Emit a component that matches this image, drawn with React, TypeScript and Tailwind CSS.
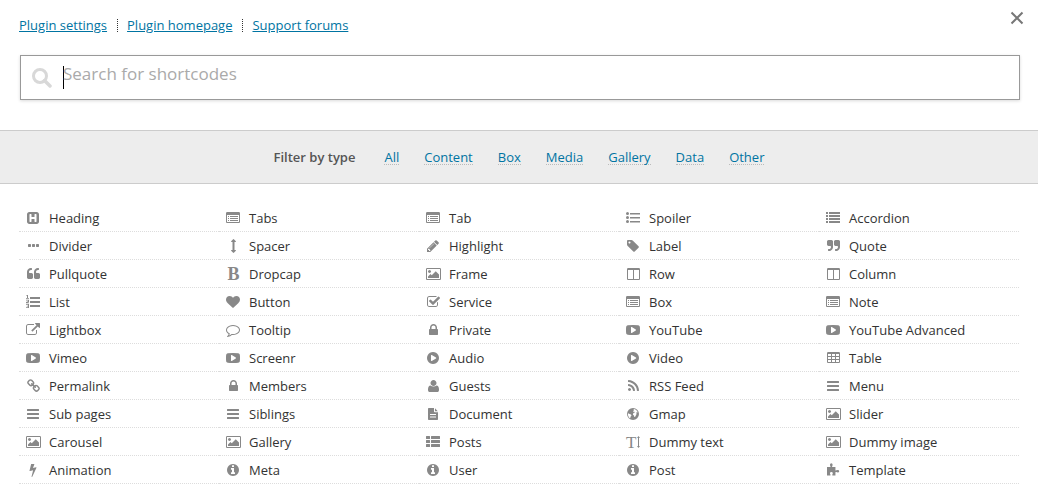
import { Fragment } from "react";

type Glyph = {
  d: string;
  // odd-width glyphs are nudged half a unit so their edges stay crisp
  odd?: boolean;
  wide?: boolean;
};

const glyphs: Record<string, Glyph> = {
  heading: {
    d: "M1344 1344v-896q0-26-19-45t-45-19h-128q-26 0-45 19t-19 45v320h-384v-320q0-26-19-45t-45-19h-128q-26 0-45 19t-19 45v896q0 26 19 45t45 19h128q26 0 45-19t19-45v-320h384v320q0 26 19 45t45 19h128q26 0 45-19t19-45zm320-928v960q0 119-84.5 203.5t-203.5 84.5h-960q-119 0-203.5-84.5t-84.5-203.5v-960q0-119 84.5-203.5t203.5-84.5h960q119 0 203.5 84.5t84.5 203.5z",
  },
  panel: {
    d: "M256 640h128v128h-128zM256 896h128v128h-128zM256 1152h128v128h-128zM512 640h1024v128h-1024zM512 896h1024v128h-1024zM512 1152h1024v128h-1024zM1664 1376v-832q0-13-9.5-22.5t-22.5-9.5h-1472q-13 0-22.5 9.5t-9.5 22.5v832q0 13 9.5 22.5t22.5 9.5h1472q13 0 22.5-9.5t9.5-22.5zm128-1088v1088q0 66-47 113t-113 47h-1472q-66 0-113-47t-47-113v-1088q0-66 47-113t113-47h1472q66 0 113 47t47 113z",
  },
  dots: {
    odd: true,
    d: "M576 736v192q0 40-28 68t-68 28h-192q-40 0-68-28t-28-68v-192q0-40 28-68t68-28h192q40 0 68 28t28 68zm512 0v192q0 40-28 68t-68 28h-192q-40 0-68-28t-28-68v-192q0-40 28-68t68-28h192q40 0 68 28t28 68zm512 0v192q0 40-28 68t-68 28h-192q-40 0-68-28t-28-68v-192q0-40 28-68t68-28h192q40 0 68 28t28 68z",
  },
  arrows: {
    odd: true,
    d: "M1216 320q0 26-19 45t-45 19h-128v1024h128q26 0 45 19t19 45-19 45l-256 256q-19 19-45 19t-45-19l-256-256q-19-19-19-45t19-45 45-19h128v-1024h-128q-26 0-45-19t-19-45 19-45l256-256q19-19 45-19t45 19l256 256q19 19 19 45z",
  },
  pencil: {
    d: "M491 1536l91-91-235-235-91 91v107h128v128h107zm523-928q0-22-22-22-10 0-17 7l-542 542q-7 7-7 17 0 22 22 22 10 0 17-7l542-542q7-7 7-17zm-54-192l416 416-832 832h-416v-416zm683 96q0 53-37 90l-166 166-416-416 166-165q36-38 90-38 53 0 91 38l235 234q37 39 37 91z",
  },
  tag: {
    d: "M576 448q0-53-37.5-90.5t-90.5-37.5-90.5 37.5-37.5 90.5 37.5 90.5 90.5 37.5 90.5-37.5 37.5-90.5zm1067 576q0 53-37 90l-491 492q-39 37-91 37-53 0-90-37l-715-716q-38-37-64.5-101t-26.5-117v-416q0-52 38-90t90-38h416q53 0 117 26.5t102 64.5l715 714q37 39 37 91z",
  },
  quoteRight: {
    odd: true,
    d: "M832 320v704q0 104-40.5 198.5t-109.5 163.5-163.5 109.5-198.5 40.5h-64q-26 0-45-19t-19-45v-128q0-26 19-45t45-19h64q106 0 181-75t75-181v-32q0-40-28-68t-68-28h-224q-80 0-136-56t-56-136v-384q0-80 56-136t136-56h384q80 0 136 56t56 136zm896 0v704q0 104-40.5 198.5t-109.5 163.5-163.5 109.5-198.5 40.5h-64q-26 0-45-19t-19-45v-128q0-26 19-45t45-19h64q106 0 181-75t75-181v-32q0-40-28-68t-68-28h-224q-80 0-136-56t-56-136v-384q0-80 56-136t136-56h384q80 0 136 56t56 136z",
  },
  quoteLeft: {
    odd: true,
    d: "M832 960v384q0 80-56 136t-136 56h-384q-80 0-136-56t-56-136v-704q0-103 40-198.5t109.5-163.5 163.5-109.5 198.5-40.5h64q26 0 45 19t19 45v128q0 26-19 45t-45 19h-64q-106 0-181 75t-75 181v32q0 40 28 68t68 28h224q80 0 136 56t56 136zm896 0v384q0 80-56 136t-136 56h-384q-80 0-136-56t-56-136v-704q0-103 40-198.5t109.5-163.5 163.5-109.5 198.5-40.5h64q26 0 45 19t19 45v128q0 26-19 45t-45 19h-64q-106 0-181 75t-75 181v32q0 40 28 68t68 28h224q80 0 136 56t56 136z",
  },
  picture: {
    wide: true,
    d: "M640 576q0 80-56 136t-136 56-136-56-56-136 56-136 136-56 136 56 56 136zm1024 384v448h-1408v-192l320-320 160 160 512-512zm96-704h-1600q-13 0-22.5 9.5t-9.5 22.5v1216q0 13 9.5 22.5t22.5 9.5h1600q13 0 22.5-9.5t9.5-22.5v-1216q0-13-9.5-22.5t-22.5-9.5zm160 32v1216q0 66-47 113t-113 47h-1600q-66 0-113-47t-47-113v-1216q0-66 47-113t113-47h1600q66 0 113 47t47 113z",
  },
  columns: {
    odd: true,
    d: "M224 1536h608v-1152h-640v1120q0 13 9.5 22.5t22.5 9.5zm1376-32v-1120h-640v1152h608q13 0 22.5-9.5t9.5-22.5zm128-1216v1216q0 66-47 113t-113 47h-1344q-66 0-113-47t-47-113v-1216q0-66 47-113t113-47h1344q66 0 113 47t47 113z",
  },
  bullets: {
    d: "M384 320a192 192 0 1 1-384 0a192 192 0 1 1 384 0zM384 832a192 192 0 1 1-384 0a192 192 0 1 1 384 0zM384 1344a192 192 0 1 1-384 0a192 192 0 1 1 384 0zM512 256h1280v192h-1280zM512 768h1280v192h-1280zM512 1280h1280v192h-1280z",
  },
  list: {
    d: "M0 128h256v256h-256zM0 512h256v256h-256zM0 896h256v256h-256zM0 1280h256v256h-256zM384 128h1408v256h-1408zM384 512h1408v256h-1408zM384 896h1408v256h-1408zM384 1280h1408v256h-1408z",
  },
  numbered: {
    d: "M64 0h192v384h128v96h-384v-96h128v-256h-64zM0 608h384v288l-224 64h224v96h-384v-160l256-96v-96h-256zM0 1152h384v512h-384v-96h256v-112h-160v-96h160v-112h-256zM512 256h1280v256h-1280zM512 768h1280v256h-1280zM512 1280h1280v256h-1280z",
  },
  heart: {
    d: "M896 1664q-26 0-44-18l-624-602q-10-8-27.5-26t-55.5-65.5-68-97.5-53.5-121-23.5-138q0-220 127-344t351-124q62 0 126.5 21.5t120 58 95.5 68.5 76 68q36-36 76-68t95.5-68.5 120-58 126.5-21.5q224 0 351 124t127 344q0 221-229 450l-623 600q-18 18-44 18z",
  },
  check: {
    odd: true,
    d: "M1472 930v318q0 119-84.5 203.5t-203.5 84.5h-832q-119 0-203.5-84.5t-84.5-203.5v-832q0-119 84.5-203.5t203.5-84.5h832q63 0 117 25 15 7 18 23 3 17-9 29l-49 49q-10 10-23 10-3 0-9-2-23-6-45-6h-832q-66 0-113 47t-47 113v832q0 66 47 113t113 47h832q66 0 113-47t47-113v-254q0-13 9-22l64-64q10-10 23-10 6 0 12 3 20 8 20 29zm231-489l-814 814q-24 24-57 24t-57-24l-430-430q-24-24-24-57t24-57l110-110q24-24 57-24t57 24l263 263 647-647q24-24 57-24t57 24l110 110q24 24 24 57t-24 57z",
  },
  external: {
    d: "M1408 928v320q0 119-84.5 203.5t-203.5 84.5h-832q-119 0-203.5-84.5t-84.5-203.5v-832q0-119 84.5-203.5t203.5-84.5h704q14 0 23 9t9 23v64q0 14-9 23t-23 9h-704q-66 0-113 47t-47 113v832q0 66 47 113t113 47h832q66 0 113-47t47-113v-320q0-14 9-23t23-9h64q14 0 23 9t9 23zm384-864v512q0 26-19 45t-45 19-45-19l-176-176-652 652q-10 10-23 10t-23-10l-114-114q-10-10-10-23t10-23l652-652-176-176q-19-19-19-45t19-45 45-19h512q26 0 45 19t19 45z",
  },
  comment: {
    d: "M896 384q-204 0-381.5 69.5t-282 187.5-104.5 255q0 112 71.5 213.5t201.5 175.5l87 50-27 96q-24 91-70 172 152-63 275-171l43-38 57 6q69 8 130 8 204 0 381.5-69.5t282-187.5 104.5-255-104.5-255-282-187.5-381.5-69.5zm896 512q0 174-120 321.5t-326 233-450 85.5q-70 0-145-8-198 175-460 242-49 14-114 22h-5q-15 0-27-10.5t-16-27.5v-1q-3-4-.5-12t2-10 4.5-9.5l6-9 7-8.5 8-9q7-8 31-34.5t34.5-38 31-39.5 32.5-51 27-59 26-76q-157-89-247.5-220t-90.5-281q0-174 120-321.5t326-233 450-85.5 450 85.5 326 233 120 321.5z",
  },
  lock: {
    odd: true,
    d: "M640 768h512v-192q0-106-75-181t-181-75-181 75-75 181v192zm832 96v576q0 40-28 68t-68 28h-960q-40 0-68-28t-28-68v-576q0-40 28-68t68-28h32v-192q0-184 132-316t316-132 316 132 132 316v192h32q40 0 68 28t28 68z",
  },
  youtube: {
    d: "M1280 896q0-37-30-54l-512-320q-31-20-65-2-33 18-33 56v640q0 38 33 56 16 8 31 8 20 0 34-10l512-320q30-17 30-54zm512 0q0 96-1 150t-8.5 136.5-22.5 147.5q-16 73-69 123t-124 58q-222 25-671 25t-671-25q-71-8-124.5-58t-69.5-123q-14-65-21.5-147.5t-8.5-136.5-1-150 1-150 8.5-136.5 22.5-147.5q16-73 69-123t124-58q222-25 671-25t671 25q71 8 124.5 58t69.5 123q14 65 21.5 147.5t8.5 136.5 1 150z",
  },
  play: {
    d: "M896 128q209 0 385.5 103t279.5 279.5 103 385.5-103 385.5-279.5 279.5-385.5 103-385.5-103-279.5-279.5-103-385.5 103-385.5 279.5-279.5 385.5-103zm384 823q32-18 32-55t-32-55l-544-320q-31-19-64-1-32 19-32 56v640q0 37 32 56 16 8 32 8 17 0 32-9z",
  },
  table: {
    d: "M288 128h1344q66 0 113 47t47 113v1088q0 66-47 113t-113 47h-1344q-66 0-113-47t-47-113v-1088q0-66 47-113t113-47zM256 384v256h384v-256zM768 384v256h384v-256zM1280 384v256h384v-256zM256 768v256h384v-256zM768 768v256h384v-256zM1280 768v256h384v-256zM256 1152v256h384v-256zM768 1152v256h384v-256zM1280 1152v256h384v-256z",
  },
  link: {
    odd: true,
    d: "M1520 1216q0-40-28-68l-208-208q-28-28-68-28-42 0-72 32 3 3 19 18.5t21.5 21.5 15 19 13 25.5 3.5 27.5q0 40-28 68t-68 28q-15 0-27.5-3.5t-25.5-13-19-15-21.5-21.5-18.5-19q-33 31-33 73 0 40 28 68l206 207q27 27 68 27 40 0 68-26l147-146q28-28 28-67zm-703-705q0-40-28-68l-206-207q-28-28-68-28-39 0-68 27l-147 146q-28 28-28 67 0 40 28 68l208 208q27 27 68 27 42 0 72-31-3-3-19-18.5t-21.5-21.5-15-19-13-25.5-3.5-27.5q0-40 28-68t68-28q15 0 27.5 3.5t25.5 13 19 15 21.5 21.5 18.5 19q33-31 33-73zm895 705q0 120-85 203l-147 146q-83 83-203 83-121 0-204-85l-206-207q-83-83-83-203 0-123 88-209l-88-88q-86 88-208 88-120 0-204-84l-208-208q-84-84-84-204t85-203l147-146q83-83 203-83 121 0 204 85l206 207q83 83 83 203 0 123-88 209l88 88q86-88 208-88 120 0 204 84l208 208q84 84 84 204z",
  },
  user: {
    odd: true,
    d: "M1600 1399q0 109-62.5 187t-150.5 78h-982q-88 0-150.5-78t-62.5-187q0-85 8.5-160.5t31.5-152 58.5-131 94-89 134.5-34.5q131 128 377 128t377-128q76 0 134.5 34.5t94 89 58.5 131 31.5 152 8.5 160.5zm-320-887q0 159-112.5 271.5t-271.5 112.5-271.5-112.5-112.5-271.5 112.5-271.5 271.5-112.5 271.5 112.5 112.5 271.5z",
  },
  rss: {
    odd: true,
    d: "M576 1344q0 80-56 136t-136 56-136-56-56-136 56-136 136-56 136 56 56 136zm512 123q2 28-17 48-18 21-47 21h-135q-25 0-43-16.5t-20-41.5q-22-229-184.5-391.5t-391.5-184.5q-25-2-41.5-20t-16.5-43v-135q0-29 21-47 17-17 43-17h5q160 13 306 80.5t259 181.5q114 113 181.5 259t80.5 306zm512 2q2 27-18 47-18 20-46 20h-143q-26 0-44.5-17.5t-19.5-42.5q-12-215-101-408.5t-231.5-336-336-231.5-408.5-102q-25-1-42.5-19.5t-17.5-43.5v-143q0-28 20-46 18-18 44-18h3q262 13 501.5 120t425.5 294q187 186 294 425.5t120 501.5z",
  },
  bars: {
    d: "M192 256h1408q64 0 64 64v128q0 64-64 64h-1408q-64 0-64-64v-128q0-64 64-64zM192 768h1408q64 0 64 64v128q0 64-64 64h-1408q-64 0-64-64v-128q0-64 64-64zM192 1280h1408q64 0 64 64v128q0 64-64 64h-1408q-64 0-64-64v-128q0-64 64-64z",
  },
  document: {
    d: "M352 128h672v448q0 96 96 96h416v896q0 96-96 96h-1088q-96 0-96-96v-1344q0-96 96-96zM1152 160l352 384h-352zM512 896v128h768v-128zM512 1216v128h768v-128z",
  },
  globe: {
    d: "M896 128a768 768 0 1 0 0 1536a768 768 0 1 0 0-1536zM960 260l200 30 240 180 110 240-110-50-110 70 70 130-70 160-120 230-110 40-40-200-130-90 20-180 130-110 130-20-60-90-130 30-80-120 130-90zM260 800l200 110 180 60 60 140-110 110-50 220-130-70-120-230-50-180z",
  },
  posts: {
    d: "M64 128h384q64 0 64 64v256q0 64-64 64h-384q-64 0-64-64v-256q0-64 64-64zM704 128h1024q64 0 64 64v256q0 64-64 64h-1024q-64 0-64-64v-256q0-64 64-64zM64 640h384q64 0 64 64v256q0 64-64 64h-384q-64 0-64-64v-256q0-64 64-64zM704 640h1024q64 0 64 64v256q0 64-64 64h-1024q-64 0-64-64v-256q0-64 64-64zM64 1152h384q64 0 64 64v256q0 64-64 64h-384q-64 0-64-64v-256q0-64 64-64zM704 1152h1024q64 0 64 64v256q0 64-64 64h-1024q-64 0-64-64v-256q0-64 64-64z",
  },
  bolt: {
    d: "M1333 566q18 20 7 44l-540 1157q-13 25-42 25-4 0-14-2-17-5-25.5-19t-4.5-30l197-808-406 101q-4 1-12 1-18 0-31-11-18-15-13-39l201-825q4-14 16-23t28-9h328q19 0 32 12.5t13 29.5q0 8-5 18l-171 463 396-98q8-2 12-2 19 0 34 15z",
  },
  info: {
    d: "M1152 1376v-160q0-14-9-23t-23-9h-96v-512q0-14-9-23t-23-9h-320q-14 0-23 9t-9 23v160q0 14 9 23t23 9h96v320h-96q-14 0-23 9t-9 23v160q0 14 9 23t23 9h448q14 0 23-9t9-23zm-128-896v-160q0-14-9-23t-23-9h-192q-14 0-23 9t-9 23v160q0 14 9 23t23 9h192q14 0 23-9t9-23zm640 416q0 209-103 385.5t-279.5 279.5-385.5 103-385.5-103-279.5-279.5-103-385.5 103-385.5 279.5-279.5 385.5-103 385.5 103 279.5 279.5 103 385.5z",
  },
  puzzle: {
    d: "M128 512h420q60-40 20-110-60-90-60-180 0-200 170-200t170 200q0 90-60 180-40 70 20 110h400v400q40 60 110 20 90-50 190-50 180 0 180 170t-180 170q-100 0-190-60-70-40-110 20v402h-380q-60-40-20-120 60-80 60-160 0-150-180-150t-180 150q0 80 60 160 40 80-20 120h-420z",
  },
};

function Icon({ name }: { name: string }) {
  if (name === "dropcap" || name === "dummyText") {
    return (
      <svg viewBox="0 0 14 14" className="h-3.5 w-3.5 overflow-visible fill-current font-['Liberation_Serif',serif]" aria-hidden>
        {name === "dropcap" ? (
          <text x="1.500" y="13" fontSize="18" fontWeight="700">
            B
          </text>
        ) : (
          <>
            <text x="0" y="13" fontSize="17">
              T
            </text>
            <path d="M12 3h-1l1.500-2 1.500 2h-1v8h1l-1.500 2-1.500-2h1z" />
          </>
        )}
      </svg>
    );
  }

  const { d, odd, wide } = glyphs[name];
  const viewBox = wide ? "0 0 1920 1792" : odd ? "-64 0 1792 1792" : "0 0 1792 1792";
  return (
    <svg viewBox={viewBox} className={wide ? "h-3.5 w-[15px] fill-current" : "h-3.5 w-3.5 fill-current"} aria-hidden>
      <path fillRule="evenodd" d={d} />
    </svg>
  );
}

const helpLinks = ["Plugin settings", "Plugin homepage", "Support forums"];

const filters = ["All", "Content", "Box", "Media", "Gallery", "Data", "Other"];

const shortcodes: [string, string][] = [
  ["Heading", "heading"],
  ["Tabs", "panel"],
  ["Tab", "panel"],
  ["Spoiler", "bullets"],
  ["Accordion", "list"],
  ["Divider", "dots"],
  ["Spacer", "arrows"],
  ["Highlight", "pencil"],
  ["Label", "tag"],
  ["Quote", "quoteRight"],
  ["Pullquote", "quoteLeft"],
  ["Dropcap", "dropcap"],
  ["Frame", "picture"],
  ["Row", "columns"],
  ["Column", "columns"],
  ["List", "numbered"],
  ["Button", "heart"],
  ["Service", "check"],
  ["Box", "panel"],
  ["Note", "panel"],
  ["Lightbox", "external"],
  ["Tooltip", "comment"],
  ["Private", "lock"],
  ["YouTube", "youtube"],
  ["YouTube Advanced", "youtube"],
  ["Vimeo", "youtube"],
  ["Screenr", "youtube"],
  ["Audio", "play"],
  ["Video", "play"],
  ["Table", "table"],
  ["Permalink", "link"],
  ["Members", "lock"],
  ["Guests", "user"],
  ["RSS Feed", "rss"],
  ["Menu", "bars"],
  ["Sub pages", "bars"],
  ["Siblings", "bars"],
  ["Document", "document"],
  ["Gmap", "globe"],
  ["Slider", "picture"],
  ["Carousel", "picture"],
  ["Gallery", "picture"],
  ["Posts", "posts"],
  ["Dummy text", "dummyText"],
  ["Dummy image", "picture"],
  ["Animation", "bolt"],
  ["Meta", "info"],
  ["User", "info"],
  ["Post", "info"],
  ["Template", "puzzle"],
];

export default function App() {
  return (
    <div className="bg-white font-['Open_Sans',sans-serif] text-[13px] leading-5 text-[#333]">
      <header className="flex items-start justify-between pt-[11px] pr-3.5 pl-[19px]">
        <nav className="flex items-center pt-1 text-[#0074a2]">
          {helpLinks.map((label, idx) => (
            <Fragment key={label}>
              {idx > 0 && <span className="mr-[9px] ml-2.5 h-[13px] border-l border-dotted border-[#333]" />}
              <a href="#" className="underline">
                {label}
              </a>
            </Fragment>
          ))}
        </nav>
        <button type="button" aria-label="Close" className="text-[#777]">
          <svg viewBox="0 0 14 14" className="h-3.5 w-3.5" aria-hidden>
            <path d="M1.500 1.500l11 11M12.500 1.500l-11 11" fill="none" stroke="currentColor" strokeWidth="2" />
          </svg>
        </button>
      </header>

      <div className="pt-5 pr-[18px] pb-[30px] pl-5">
        <div className="flex h-[45px] items-center border border-[#999] pl-[11px] shadow-[0_1px_3px_rgba(0,0,0,0.15)]">
          <svg viewBox="0 0 20 20" className="h-5 w-5 text-[#d8d8d8]" aria-hidden>
            <circle cx="8" cy="8" r="6.500" fill="none" stroke="currentColor" strokeWidth="3" />
            <path d="M12.500 12.500l5.500 5.500" stroke="currentColor" strokeWidth="3.500" strokeLinecap="round" />
          </svg>
          <span className="ml-[11px] h-[23px] w-px bg-black" />
          <input
            type="text"
            aria-label="Search for shortcodes"
            placeholder="Search for shortcodes"
            className="-ml-px h-full min-w-0 flex-1 pb-2 text-[17px] outline-none placeholder:text-[#aaa]"
          />
        </div>
      </div>

      <div className="flex h-[54px] items-center justify-center gap-[25px] border-y border-[#ccc] bg-[#ededed] leading-[14px]">
        <span className="mr-1 pb-px font-semibold text-[#555]">Filter by type</span>
        {filters.map((label) => (
          <a key={label} href="#" className="border-b border-dotted border-[#bbb] text-[#0074a2]">
            {label}
          </a>
        ))}
      </div>

      <ul className="grid grid-cols-5 px-[19px] py-5">
        {shortcodes.map(([label, icon], idx) => (
          <li key={idx}>
            <button
              type="button"
              className="flex h-7 w-full items-center border-b border-dotted border-[#ddd] pt-px pl-[7px] text-left"
            >
              <span className="flex w-[23px] shrink-0 text-[#888]">
                <Icon name={icon} />
              </span>
              {label}
            </button>
          </li>
        ))}
      </ul>
    </div>
  );
}
